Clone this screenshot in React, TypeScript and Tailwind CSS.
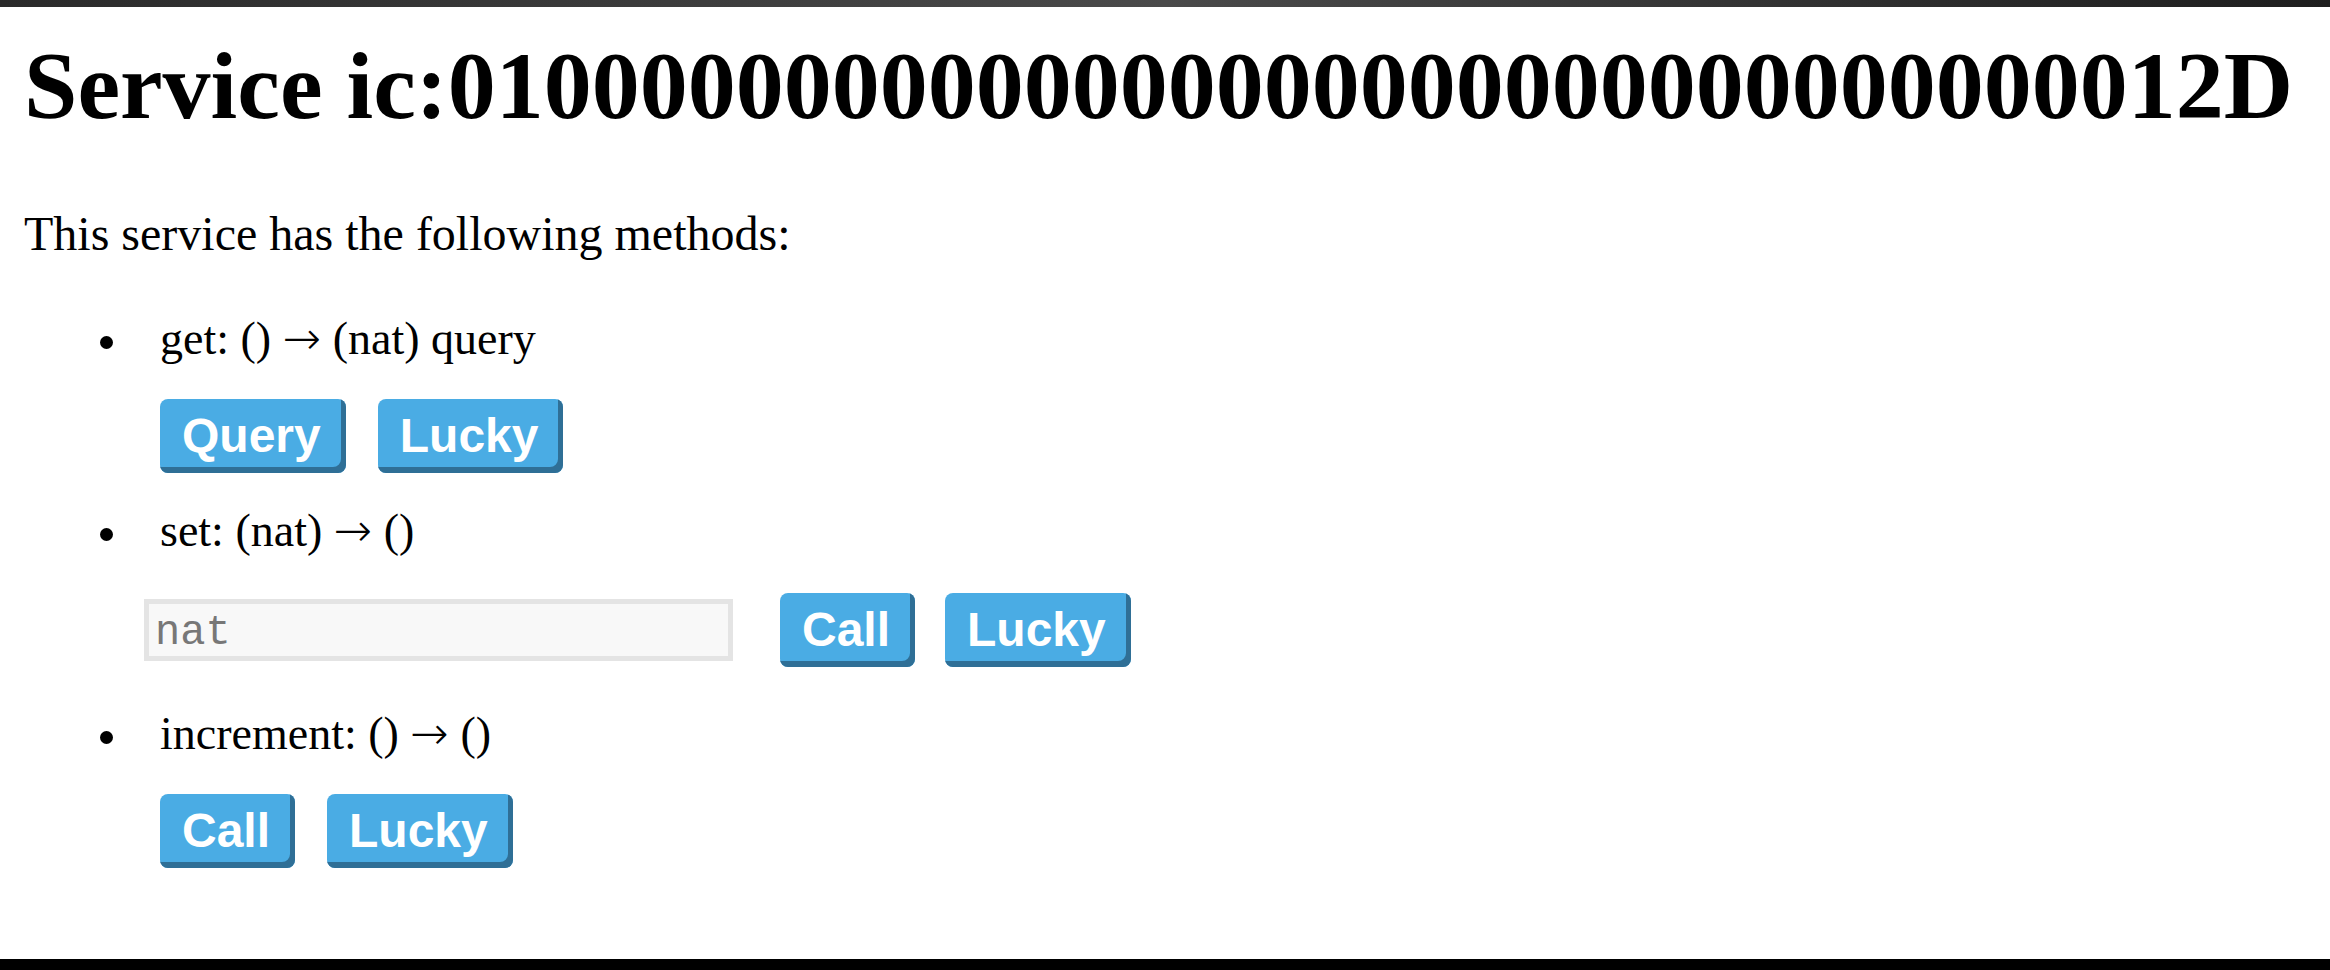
const serviceId = 'ic:01' + '0'.repeat(33) + '12D';

const methods = [
    { name: 'get', args: '()', ret: '(nat) query', action: 'Query', input: false },
    { name: 'set', args: '(nat)', ret: '()', action: 'Call', input: true },
    { name: 'increment', args: '()', ret: '()', action: 'Call', input: false },
];

const Button = ({ label }: { label: string }) => (
    <button className="flex h-[74px] items-center rounded-[8px] bg-[#4aace4] pl-[22px] pr-[25px] font-['Liberation_Sans',Arial,sans-serif] text-[48px] font-bold leading-none text-white shadow-[inset_-5px_-6px_0_#2f6f96]">
        {label}
    </button>
);

const MethodItem = ({
    name,
    args,
    ret,
    action,
    input,
    top,
}: {
    name: string;
    args: string;
    ret: string;
    action: string;
    input: boolean;
    top: string;
}) => (
    <li className={`flex flex-col ${top}`}>
        <div className="flex items-start">
            <div className="w-[136px] shrink-0">
                <div className="ml-[76px] mt-[25px] h-[13px] w-[13px] rounded-full bg-black" />
            </div>
            <span className="text-[46px] leading-[54px]">
                {name}: {args}{' '}
                <span className="font-['DejaVu_Sans',sans-serif] text-[46px] font-extralight">{'\u2192'}</span>{' '}
                {ret}
            </span>
        </div>
        {input ? (
            <div className="mt-[35px] flex items-center pl-[120px]">
                <input
                    placeholder="nat"
                    className="h-[62px] w-[589px] border-[5px] border-[#e4e4e4] bg-[#f8f8f8] px-[6px] pt-[6px] font-['Liberation_Mono',monospace] text-[42px] outline-none placeholder:text-[#777]"
                />
                <div className="ml-[47px] flex gap-[30px]">
                    <Button label={action} />
                    <Button label="Lucky" />
                </div>
            </div>
        ) : (
            <div className="mt-[33px] flex gap-[32px] pl-[136px]">
                <Button label={action} />
                <Button label="Lucky" />
            </div>
        )}
    </li>
);

export default function App() {
    return (
        <div className="flex h-[970px] flex-col overflow-hidden bg-white font-['Liberation_Serif','Times_New_Roman',serif] text-black">
            <div className="h-[7px] shrink-0 bg-gradient-to-r from-[#2a2a2a] via-[#4a4a4a] to-[#1e1e1e]" />

            <main className="pl-[24px]">
                <h1 className="mt-[24px] whitespace-nowrap text-[96px] font-bold leading-[110px]">
                    Service {serviceId}
                </h1>
                <p className="mt-[66px] text-[48px] leading-[54px]">
                    This service has the following methods:
                </p>
                <ul className="mt-[50px]">
                    <MethodItem {...methods[0]} top="" />
                    <MethodItem {...methods[1]} top="mt-[30px]" />
                    <MethodItem {...methods[2]} top="mt-[39px]" />
                </ul>
            </main>

            <div className="mt-auto h-[11px] shrink-0 bg-black" />
        </div>
    );
}
